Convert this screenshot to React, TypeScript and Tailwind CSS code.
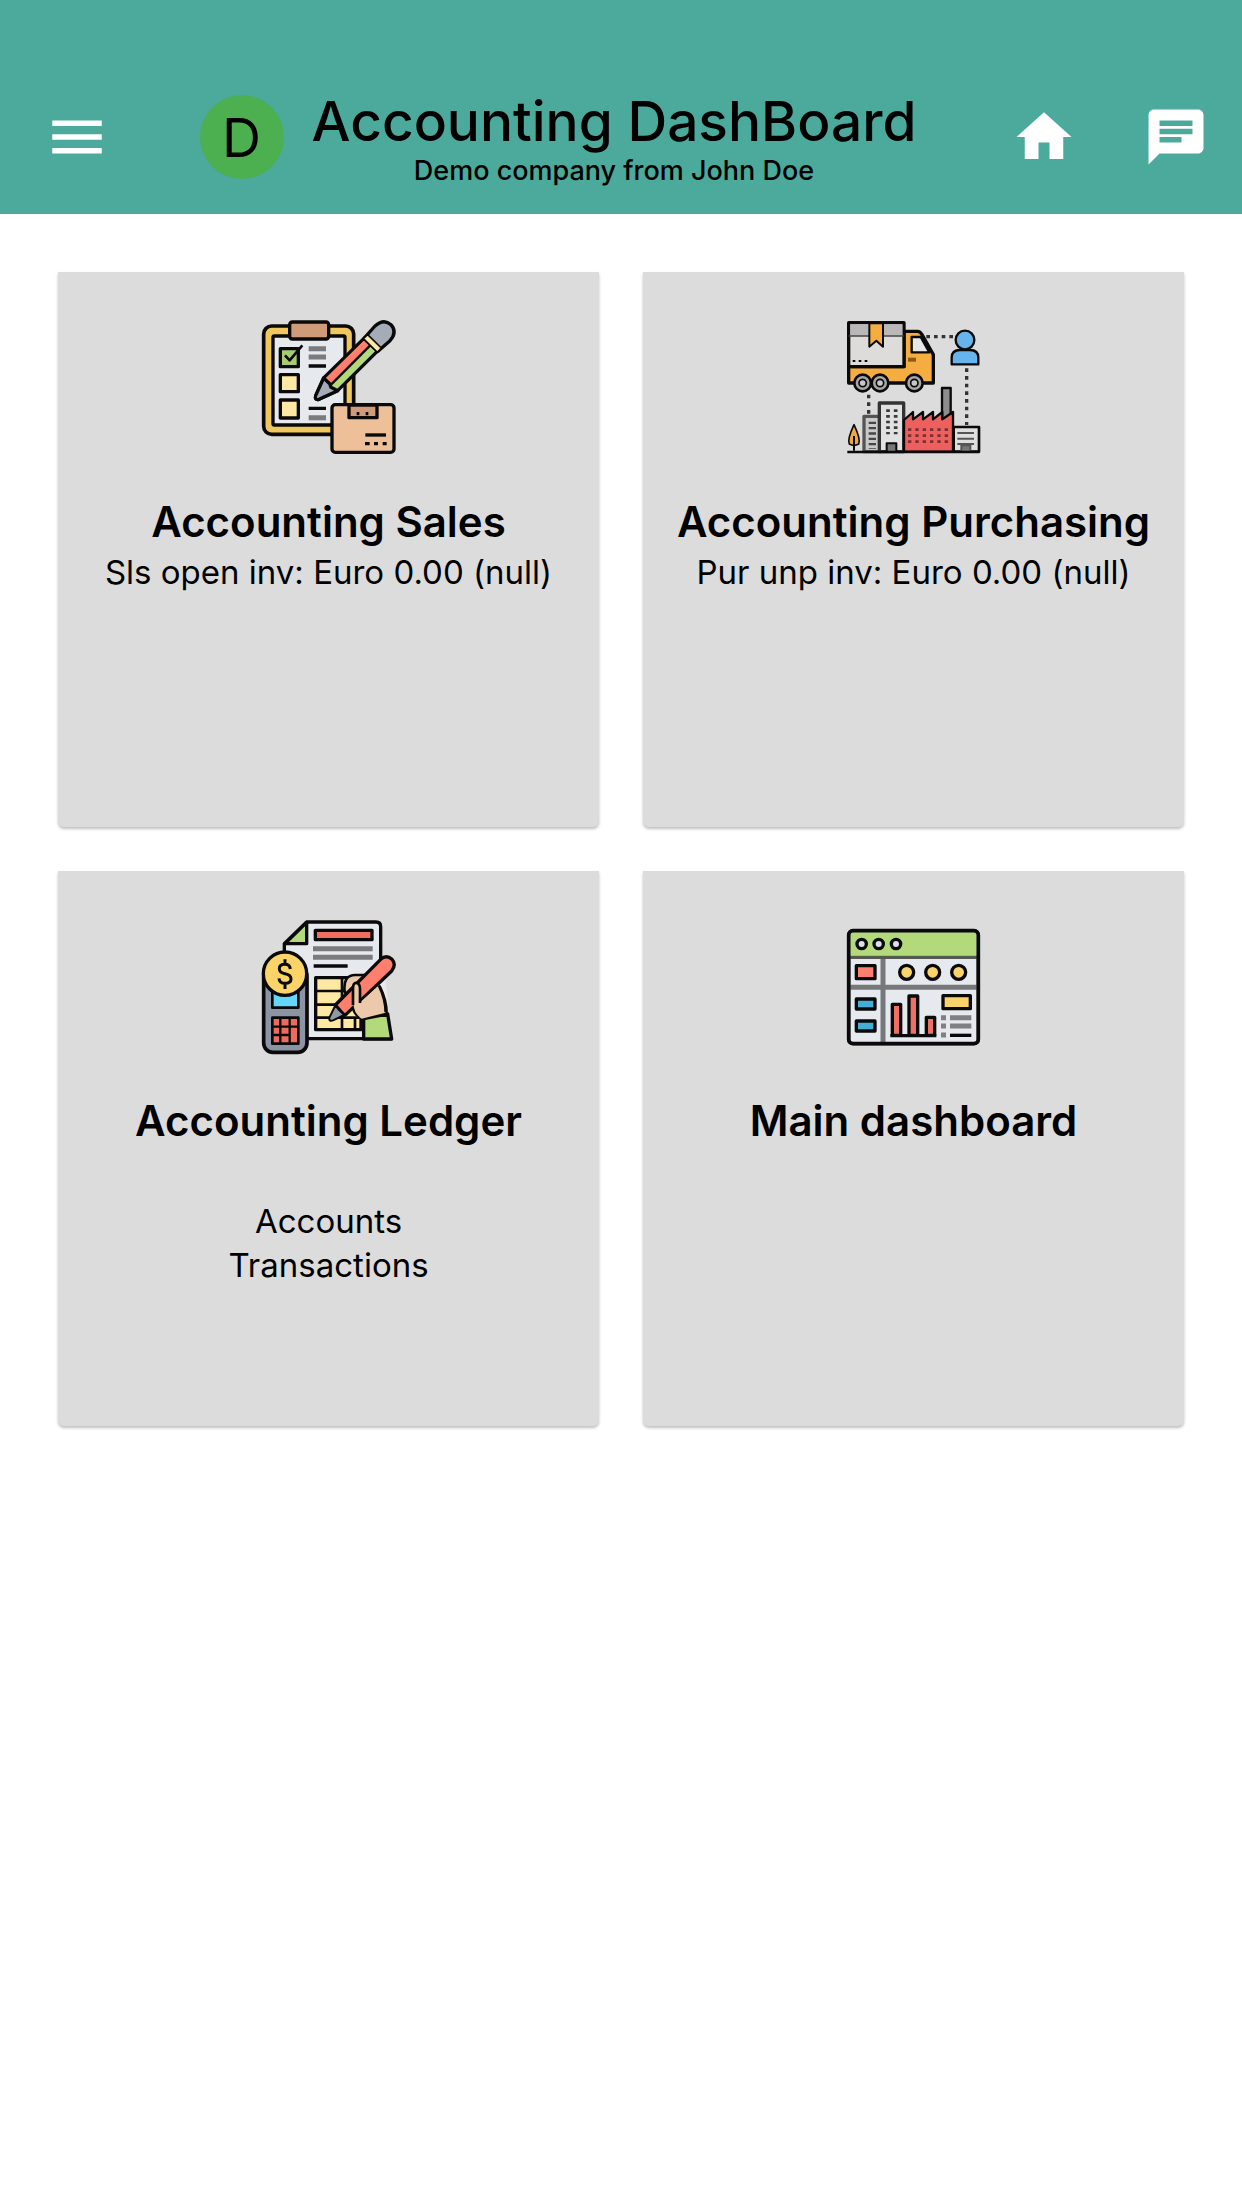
import type { ReactNode } from "react";

function Art({ children }: { children: ReactNode }) {
  return (
    <svg
      viewBox="-2 2 480 480"
      className="size-40 shrink-0"
      aria-hidden="true"
      fill="none"
      stroke="#0a0a0a"
      strokeWidth="10"
      strokeLinejoin="round"
    >
      {children}
    </svg>
  );
}

function SalesArt() {
  return (
    <Art>
      <rect x="42" y="50" width="270" height="325" rx="24" fill="#efc75e" strokeWidth="11" />
      <rect x="70" y="80" width="216" height="267" rx="4" fill="#e6e9ed" />
      <rect x="120" y="38" width="117" height="51" rx="8" fill="#cf9b78" />
      <rect x="92" y="118" width="54" height="54" fill="#a5cc70" />
      <path d="M106 138l14 15 38-45" strokeWidth="8" />
      <rect x="92" y="196" width="54" height="51" fill="#ffe8a3" />
      <rect x="92" y="272" width="54" height="54" fill="#ffe8a3" />
      <path d="M177 118h52M177 143h52M177 325h52" stroke="#7a7b7e" strokeWidth="15" />
      <path d="M177 170h52M177 297h52" />
      <path d="M343 87L222 206L198 259Q194 273 208 270L264 244L385 124Z" fill="#b3da7a" />
      <path d="M346 91L226 209L244 226L363 106Z" fill="#fe7f6d" stroke="none" />
      <path d="M245 225L364 106" strokeWidth="7" />
      <path d="M222 206L198 259Q194 273 208 270L264 244L244 234L240 223Z" fill="#a4acb8" />
      <path d="M343 87L376 50Q402 26 424 46Q444 69 421 94L385 126Z" fill="#a4acb8" />
      <path d="M341 88L354 76L395 116L383 129Z" fill="#ffe8a3" strokeWidth="5" />
      <rect x="247" y="286" width="186" height="143" rx="10" fill="#edc09a" />
      <path d="M298 287h84v38h-84z" fill="#cf9b78" />
      <path d="M325 318v-10M352 318v-10" strokeWidth="8" />
      <path d="M347 377h62" />
      <path d="M346 403h14M373 403h12M399 403h12" />
    </Art>
  );
}

function PurchasingArt() {
  return (
    <Art>
      <path d="M42 172h166V66h40q9 0 14 10l34 60v85H42z" fill="#f5ad3f" />
      <rect x="42" y="40" width="166" height="132" fill="#dedcdb" />
      <path d="M47 45h156v34H47z" fill="#b9b7b7" stroke="none" />
      <path d="M42 80h62M145 80h62" strokeWidth="5" stroke="#444" />
      <path d="M104 42h41v70l-20-18-21 18z" fill="#f5ad3f" strokeWidth="6" />
      <path d="M54 155h48" strokeWidth="6" strokeDasharray="8 10" />
      <path d="M231 83h27l26 46h-53z" fill="#e6e7e8" strokeWidth="7" />
      <path d="M220 151h24" stroke="#8a5a18" strokeWidth="12" />
      <g fill="#a8a8a8" strokeWidth="8">
        <circle cx="84" cy="221" r="25" />
        <circle cx="136" cy="221" r="25" />
        <circle cx="239" cy="221" r="25" />
      </g>
      <g fill="#c7c7c7" strokeWidth="5">
        <circle cx="84" cy="221" r="11" />
        <circle cx="136" cy="221" r="11" />
        <circle cx="239" cy="221" r="11" />
      </g>
      <path d="M275 82h80M396 177v170M102 256v66" stroke="#333" strokeDasharray="11 12" />
      <path d="M351 165v-20q0-23 25-23h30q25 0 25 23v20z" fill="#67b3ec" strokeWidth="7" />
      <circle cx="391" cy="92" r="28" fill="#67b3ec" strokeWidth="7" />
      <path d="M58 346q-21 45-14 58 14 8 28 0 7-13-14-58z" fill="#f0a93d" strokeWidth="5" />
      <path d="M58 380v44" strokeWidth="6" />
      <rect x="88" y="321" width="50" height="106" fill="#c9c9c9" stroke="#555" />
      <path d="M113 337v82" strokeWidth="22" stroke="#454545" strokeDasharray="7 9" />
      <rect x="134" y="281" width="73" height="146" fill="#e1e1e1" stroke="#333" />
      <path d="M160 300v75M183 300v75" strokeWidth="11" stroke="#3a3a3a" strokeDasharray="8 9" />
      <path d="M156 427v-25h29v25" fill="#777" strokeWidth="6" />
      <path d="M322 330v-94h26v94" fill="#8d8d8d" strokeWidth="7" />
      <path d="M208 427V332l27-24v22l30-22v22l30-22v22l28-22v22l32-22v119z" fill="#ee605f" strokeWidth="7" />
      <path d="M220 361h120M220 379h120M220 397h120" stroke="#7b3033" strokeWidth="8" strokeDasharray="10 12" />
      <rect x="357" y="353" width="76" height="74" fill="#dedede" strokeWidth="8" />
      <path d="M368 371h50M368 388h50M368 404h50" strokeWidth="6" stroke="#555" />
      <path d="M380 427v-19h27v19" fill="#777" stroke="#555" strokeWidth="6" />
      <path d="M38 428h396" strokeWidth="8" />
    </Art>
  );
}

function LedgerArt() {
  return (
    <Art>
      <path d="M104 390V106l67-65h208q14 0 14 14l32 337z" fill="#e6e9ed" stroke="none" />
      <path d="M395 110L430 388L440 380L440 100Z" fill="#dcdcdc" stroke="none" />
      <path d="M104 135v-29l67-65h208q14 0 14 14v120M170 391h255" />
      <path d="M106 106h65V42z" fill="#b3da7a" />
      <rect x="197" y="66" width="170" height="28" fill="#ee6f60" />
      <path d="M190 121h179M190 147h179" stroke="#7a7b7e" strokeWidth="15" />
      <path d="M192 173h102" />
      <path d="M198 208h136v156H198z" fill="#ffe8a3" />
      <path d="M198 248h90M198 289h74M198 328h136M277 210v154M316 328v36" strokeWidth="8" />
      <path d="M285 250q-6-50 32-50h30l44 36q20 40 20 80l-76 14q-26-12-27-45z" fill="#edc9ac" strokeWidth="8" />
      <path d="M342 331l72-14 12 75h-84z" fill="#b3da7a" />
      <path d="M257 290L393 153Q410 138 427 153Q441 168 426 188L285 322Z" fill="#fe7f6d" />
      <path d="M257 291L239 328Q237 340 250 336L284 320L269 306Z" fill="#8f99a6" strokeWidth="6" />
      <path d="M309 237q0-17 12-14 12 4 9 22v38l58-52q24 46 20 82l-72 18q-24-16-25-48z" fill="#edc9ac" stroke="none" />
      <path d="M310 290v-50q0-18 11-16 10 2 10 18v42M388 232q20 42 20 80" strokeWidth="8" />
      <rect x="42" y="176" width="130" height="256" rx="28" fill="#8c94a3" strokeWidth="11" />
      <rect x="68" y="250" width="78" height="48" fill="#65d6f7" strokeWidth="8" />
      <rect x="68" y="328" width="78" height="78" fill="#ed6b5d" strokeWidth="8" />
      <path d="M92 330v74M120 330v74M70 355h74M70 380h50" strokeWidth="7" />
      <circle cx="106" cy="196" r="65" fill="#fbd469" />
      <path d="M122 182q-2-14-16-14-17 0-17 13 0 12 17 15 18 3 18 16 0 13-18 13-17 0-18-15M106 153v15M106 225v17" strokeWidth="9" />
    </Art>
  );
}

function DashboardArt() {
  return (
    <Art>
      <rect x="42" y="67" width="389" height="339" rx="13" fill="#e6e9ed" />
      <path d="M47 142V80q0-8 8-8h363q8 0 8 8v62z" fill="#b3da7a" stroke="none" />
      <path d="M145 150v251M46 237h381" stroke="#77787b" strokeWidth="15" />
      <path d="M46 147h381" stroke="#555a50" />
      <rect x="42" y="67" width="389" height="339" rx="13" strokeWidth="11" />
      <g fill="#dce0e8">
        <circle cx="81" cy="107" r="14" />
        <circle cx="132" cy="107" r="14" />
        <circle cx="184" cy="107" r="14" />
      </g>
      <rect x="65" y="172" width="56" height="39" fill="#fe7f6d" />
      <rect x="65" y="272" width="56" height="30" fill="#45aed6" />
      <rect x="65" y="338" width="56" height="30" fill="#45aed6" />
      <g fill="#fbd469">
        <circle cx="216" cy="192" r="21" />
        <circle cx="294" cy="192" r="21" />
        <circle cx="372" cy="192" r="21" />
        <rect x="325" y="262" width="82" height="39" />
      </g>
      <g fill="#ee7063">
        <path d="M173 381v-93h25v93zM223 381V263h26v118zM275 381v-54h25v54z" />
      </g>
      <path d="M167 382h138" />
      <path d="M319 328h15M346 328h64M319 353h15M346 353h64M319 380h15" stroke="#7f8084" strokeWidth="15" />
      <path d="M346 381h64" />
    </Art>
  );
}

function HeaderIcon({ path }: { path: string }) {
  return (
    <svg viewBox="0 0 24 24" className="size-[66px]" fill="currentColor" aria-hidden="true">
      <path d={path} />
    </svg>
  );
}

const cards: { title: string; lines: string[]; spaced?: boolean; art: ReactNode }[] = [
  { title: "Accounting Sales", lines: ["Sls open inv: Euro 0.00 (null)"], art: <SalesArt /> },
  { title: "Accounting Purchasing", lines: ["Pur unp inv: Euro 0.00 (null)"], art: <PurchasingArt /> },
  { title: "Accounting Ledger", lines: ["Accounts", "Transactions"], spaced: true, art: <LedgerArt /> },
  { title: "Main dashboard", lines: [], art: <DashboardArt /> },
];

export default function App() {
  return (
    <div className="min-h-screen bg-white font-['Inter',sans-serif] text-black">
      <header className="flex items-center bg-[#4baa9b] pt-15 text-white">
        <button type="button" aria-label="Open menu" className="flex h-[154px] w-[154px] shrink-0 items-center justify-center">
          <HeaderIcon path="M3 18h18v-2H3v2zm0-5h18v-2H3v2zm0-7v2h18V6H3z" />
        </button>
        <div className="flex min-w-0 flex-1 items-center justify-center gap-7 pr-4 text-black">
          <div className="flex size-[84px] shrink-0 items-center justify-center rounded-full bg-[#4caf50] text-[54px]">
            D
          </div>
          <div className="pt-1 text-center">
            <h1 className="text-[55px] leading-[64px] font-medium">Accounting DashBoard</h1>
            <p className="text-[27px] leading-9 font-medium">Demo company from John Doe</p>
          </div>
        </div>
        <button type="button" aria-label="Home" className="flex h-[132px] w-[132px] shrink-0 items-center justify-center">
          <HeaderIcon path="M10 20v-6h4v6h5v-8h3L12 3 2 12h3v8z" />
        </button>
        <button type="button" aria-label="Chat" className="flex h-[132px] w-[132px] shrink-0 items-center justify-center">
          <HeaderIcon path="M20 2H4c-1.1 0-1.99.9-1.99 2L2 22l4-4h14c1.1 0 2-.9 2-2V4c0-1.1-.9-2-2-2zM6 9h12v2H6V9zm8 5H6v-2h8v2zm4-6H6V6h12v2z" />
        </button>
      </header>
      <main className="grid grid-cols-2 gap-11 p-[58px]">
        {cards.map((card) => (
          <a
            key={card.title}
            href="#"
            className="flex min-h-[555px] flex-col items-center rounded-b-md bg-[#dcdcdc] pt-[38px] text-center shadow-[0_2px_3px_rgba(0,0,0,0.25)]"
          >
            {card.art}
            <h2 className="mt-6 text-[42px] leading-[56px] font-semibold">{card.title}</h2>
            <div className={card.spaced ? "mt-[50px]" : ""}>
              {card.lines.map((line) => (
                <p key={line} className="text-[33px] leading-11">
                  {line}
                </p>
              ))}
            </div>
          </a>
        ))}
      </main>
    </div>
  );
}
